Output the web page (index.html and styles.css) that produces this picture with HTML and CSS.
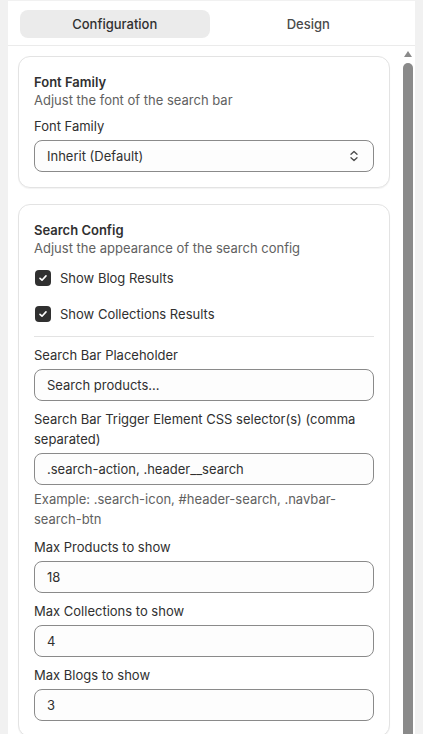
FILE: index.html
```html
<!DOCTYPE html>
<html lang="en">
<head>
<meta charset="utf-8">
<title>Search settings</title>
<link rel="stylesheet" href="styles.css">
</head>
<body>
<div class="panel">
  <div class="tabs">
    <div class="tab active">Configuration</div>
    <div class="tab">Design</div>
  </div>
  <div class="main">
    <div class="content">
      <section class="card">
        <div class="card-title">Font Family</div>
        <div class="card-sub">Adjust the font of the search bar</div>
        <div class="field first">
          <div class="label">Font Family</div>
          <div class="select">
            <span>Inherit (Default)</span>
            <svg class="chev" width="20" height="20" viewBox="0 0 20 20" fill="none" stroke="#4a4a4a" stroke-width="1.3" stroke-linecap="round" stroke-linejoin="round"><path d="M7 8.2 10 5.4 13 8.2"/><path d="M7 11.8 10 14.6 13 11.8"/></svg>
          </div>
        </div>
      </section>

      <section class="card">
        <div class="card-title">Search Config</div>
        <div class="card-sub">Adjust the appearance of the search config</div>
        <div class="checks">
          <div class="check-row">
            <span class="box"><svg width="16" height="16" viewBox="0 0 16 16" fill="none" stroke="#fff" stroke-width="1.6" stroke-linecap="round" stroke-linejoin="round"><path d="M5 8.3 7 10.2 11 5.9"/></svg></span>
            <span>Show Blog Results</span>
          </div>
          <div class="check-row">
            <span class="box"><svg width="16" height="16" viewBox="0 0 16 16" fill="none" stroke="#fff" stroke-width="1.6" stroke-linecap="round" stroke-linejoin="round"><path d="M5 8.3 7 10.2 11 5.9"/></svg></span>
            <span>Show Collections Results</span>
          </div>
        </div>
        <div class="divider"></div>
        <div class="field first">
          <div class="label">Search Bar Placeholder</div>
          <div class="input">Search products...</div>
        </div>
        <div class="field">
          <div class="label">Search Bar Trigger Element CSS selector(s) (comma separated)</div>
          <div class="input">.search-action, .header__search</div>
          <div class="help">Example: .search-icon, #header-search, .navbar-search-btn</div>
        </div>
        <div class="field">
          <div class="label">Max Products to show</div>
          <div class="input">18</div>
        </div>
        <div class="field">
          <div class="label">Max Collections to show</div>
          <div class="input">4</div>
        </div>
        <div class="field">
          <div class="label">Max Blogs to show</div>
          <div class="input">3</div>
        </div>
      </section>
    </div>
    <div class="scrollbar">
      <span class="arrow"></span>
      <span class="thumb"></span>
    </div>
  </div>
</div>
</body>
</html>
```

FILE: styles.css
```css
* { box-sizing: border-box; }
html, body { height: 100%; }
body {
  margin: 0 8px;
  padding-top: 1px;
  background: #f1f1f1;
  font-family: Inter, "Noto Sans", "Liberation Sans", sans-serif;
  font-size: 13px;
  line-height: 20px;
  color: #303030;
  overflow: hidden;
}
.panel {
  height: 733px;
  background: #ffffff;
  display: flex;
  flex-direction: column;
  overflow: hidden;
}
.tabs {
  display: flex;
  gap: 4px;
  padding: 9px 12px 7px;
  border-bottom: 1px solid #ebebeb;
}
.tab {
  flex: 1;
  height: 28px;
  display: flex;
  align-items: center;
  justify-content: center;
  border-radius: 8px;
  font-weight: 500;
  color: #4a4a4a;
}
.tab.active {
  background: #ebebeb;
  color: #303030;
}
.main {
  flex: 1;
  min-height: 0;
  display: flex;
}
.content {
  flex: 1;
  min-width: 0;
  padding: 10px 10px 0;
  display: flex;
  flex-direction: column;
  gap: 16px;
}
.card {
  border: 1px solid #e3e3e3;
  border-radius: 12px;
  padding: 15px;
  box-shadow: 0 1px 1px rgba(0, 0, 0, 0.05);
  background: #ffffff;
}
.card-title {
  font-weight: 600;
  line-height: 20px;
}
.card-sub {
  color: #616161;
  line-height: 16px;
}
.field {
  display: flex;
  flex-direction: column;
  gap: 4px;
  margin-top: 8px;
}
.label { color: #303030; }
.select, .input {
  height: 32px;
  border: 1px solid #8a8a8a;
  border-radius: 8px;
  background: #fdfdfd;
  padding: 0 12px;
  display: flex;
  align-items: center;
  color: #303030;
}
.select {
  justify-content: space-between;
  padding-right: 9px;
}
.chev { display: block; }
.help { color: #616161; }
.checks {
  margin-top: 12px;
  display: flex;
  flex-direction: column;
  gap: 16px;
}
.check-row {
  display: flex;
  align-items: center;
  gap: 9px;
  height: 20px;
}
.box {
  width: 16px;
  height: 16px;
  border-radius: 4px;
  background: #303030;
  display: flex;
  align-items: center;
  justify-content: center;
  margin-left: 1px;
}
.box svg { display: block; }
.divider {
  height: 1px;
  background: #e3e3e3;
  margin-top: 12px;
}
.divider + .field { margin-top: 8px; }
.scrollbar {
  width: 15px;
  display: flex;
  flex-direction: column;
  align-items: center;
  padding-top: 5px;
}
.arrow {
  width: 0;
  height: 0;
  border-left: 4.5px solid transparent;
  border-right: 4.5px solid transparent;
  border-bottom: 6px solid #8a8a8a;
  margin-left: 1px;
}
.thumb {
  flex: 1;
  width: 10px;
  margin-top: 6px;
  background: #8a8a8a;
  border-radius: 5px 5px 0 0;
}
```
